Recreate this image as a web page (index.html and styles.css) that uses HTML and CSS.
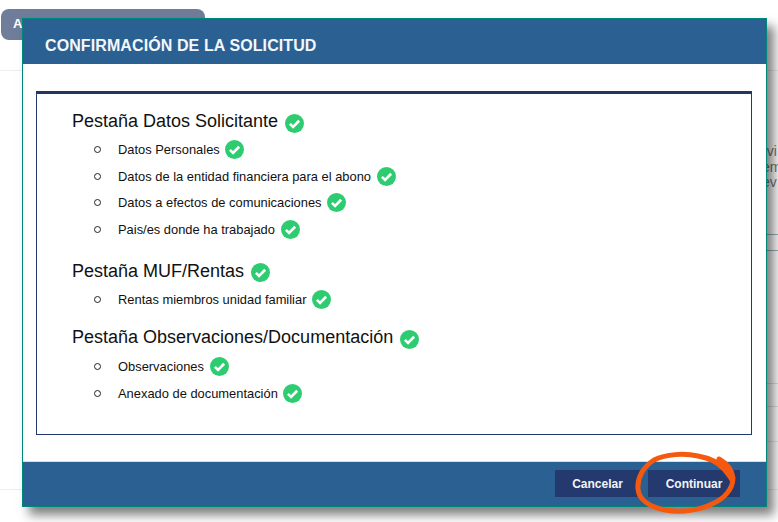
FILE: index.html
```html
<!DOCTYPE html>
<html lang="es">
<head>
<meta charset="utf-8">
<title>Confirmación de la solicitud</title>
<link rel="stylesheet" href="styles.css">
</head>
<body>
<svg width="0" height="0" class="defs" aria-hidden="true">
  <symbol id="ok" viewBox="0 0 20 20">
    <circle cx="10" cy="10" r="10" fill="#2ecc71"/>
    <path d="M5.2 10.4 8.5 13.6 14.9 7.1" fill="none" stroke="#fff" stroke-width="2.8"/>
  </symbol>
</svg>
<div class="page">
  <div class="tab">A</div>
  <div class="card">
    <div class="card-text">rvi<br>em<br>ev</div>
    <div class="card-lines"></div>
    <div class="card-lines lower"></div>
    <div class="card-lines single"></div>
  </div>
</div>
<div class="modal">
  <header class="modal-head">CONFIRMACIÓN DE LA SOLICITUD</header>
  <div class="modal-body">
    <div class="box">
      <h3>Pestaña Datos Solicitante <svg class="ico big"><use href="#ok"/></svg></h3>
      <ul>
        <li>Datos Personales <svg class="ico"><use href="#ok"/></svg></li>
        <li>Datos de la entidad financiera para el abono <svg class="ico"><use href="#ok"/></svg></li>
        <li>Datos a efectos de comunicaciones <svg class="ico"><use href="#ok"/></svg></li>
        <li>Pais/es donde ha trabajado <svg class="ico"><use href="#ok"/></svg></li>
      </ul>
      <h3>Pestaña MUF/Rentas <svg class="ico big"><use href="#ok"/></svg></h3>
      <ul class="short">
        <li>Rentas miembros unidad familiar <svg class="ico"><use href="#ok"/></svg></li>
      </ul>
      <h3>Pestaña Observaciones/Documentación <svg class="ico big"><use href="#ok"/></svg></h3>
      <ul class="last">
        <li>Observaciones <svg class="ico"><use href="#ok"/></svg></li>
        <li>Anexado de documentación <svg class="ico"><use href="#ok"/></svg></li>
      </ul>
    </div>
  </div>
  <footer class="modal-foot">
    <button class="btn cancel" type="button">Cancelar</button>
    <button class="btn" type="button">Continuar</button>
  </footer>
</div>
<svg class="scribble" viewBox="0 0 110 70" aria-hidden="true">
  <path d="M89 13C96 17 102 23 103 32 103 43 94 53 82 58 70 64 52 67 35 64 20 61 9 54 8 43 7 32 13 21 24 14 36 8 54 7 68 10 79 12 88 16 94 23 97 27 100 30 102 34" fill="none" stroke="#f4590f" stroke-width="5" stroke-linecap="round"/>
</svg>
</body>
</html>
```

FILE: styles.css
```css
* { box-sizing: border-box; }
html, body { margin: 0; height: 100%; }
body {
  width: 778px;
  height: 522px;
  overflow: hidden;
  background: #fff;
  font-family: "Liberation Sans", Arial, sans-serif;
  position: relative;
}
.defs { position: absolute; }
.page { padding: 9px 0 0 1px; }
.tab {
  width: 204px;
  height: 31px;
  padding: 7px 12px;
  background: #6f7d9b;
  border-radius: 8px;
  color: #fff;
  font-size: 13px;
  font-weight: bold;
}
.card {
  margin: 30px 0 0 -1px;
  width: 778px;
  height: 420px;
  border-top: 1px solid #eee;
  border-bottom: 1px solid #eee;
  padding: 73px 0 0 762px;
  overflow: hidden;
}
.card-text { font-size: 14px; line-height: 15.5px; color: #777; width: 30px; }
.card-lines {
  margin: 43px 0 0 -6px;
  height: 17px;
  width: 30px;
  border-top: 1px solid #9fb0bb;
  border-bottom: 1px solid #9fb0bb;
}
.card-lines.lower {
  margin-top: 132px;
  height: 24px;
  border-color: #e2e2e2;
}
.card-lines.single {
  margin-top: 34px;
  height: 1px;
  border-bottom: 0;
  border-color: #e8e8e8;
}
.modal {
  position: absolute;
  left: 22px;
  top: 18px;
  width: 745px;
  height: 489px;
  display: flex;
  flex-direction: column;
  background: #fff;
  border: 1px solid #00857a;
  box-shadow: 7px 8px 10px rgba(0, 0, 0, .5);
}
.modal-head {
  flex: none;
  height: 45px;
  padding: 18px 0 0 22px;
  background: #2b6093;
  color: #f4f7fa;
  font-size: 16px;
  letter-spacing: .1px;
  line-height: 18px;
  font-weight: bold;
}
.modal-body { flex: 1; min-height: 0; padding: 27px 14px 26px 13px; }
.box {
  height: 100%;
  padding: 16px 0 0 35px;
  border: 1px solid #233a70;
  border-top: 3px solid #22375f;
  color: #111;
}
.box h3 {
  margin: 0;
  height: 22px;
  font-size: 18px;
  line-height: 22px;
  font-weight: normal;
  display: flex;
  align-items: center;
  gap: 7px;
}
.box ul {
  margin: 5px 0 16px;
  padding: 0 0 0 44px;
  list-style: none;
}
.box ul.short { margin-bottom: 13px; }
.box ul.last { margin-top: 6px; }
.box li {
  height: 26.7px;
  font-size: 12.9px;
  line-height: 26px;
}
.box li::before {
  content: "";
  display: inline-block;
  width: 5px;
  height: 5px;
  margin: 0 17px 1px -22px;
  border: 1px solid #222;
  border-radius: 50%;
}
.ico { width: 19px; height: 19px; vertical-align: -5px; margin-left: 2px; }
.ico.big { margin: 4px 0 0; }
.modal-foot {
  flex: none;
  height: 45px;
  padding: 8px 26px 0 0;
  background: #2b6093;
  border-top: 1px solid #d8dde3;
  display: flex;
  justify-content: flex-end;
  gap: 8px;
}
.btn {
  width: 92px;
  height: 27px;
  border: 0;
  padding: 1px 0 0;
  background: #24396e;
  color: #f2f4f8;
  font-family: inherit;
  font-size: 12px;
  font-weight: bold;
}
.btn.cancel { width: 85px; }
.scribble {
  position: absolute;
  left: 630px;
  top: 446px;
  width: 110px;
  height: 70px;
  overflow: visible;
}
```
